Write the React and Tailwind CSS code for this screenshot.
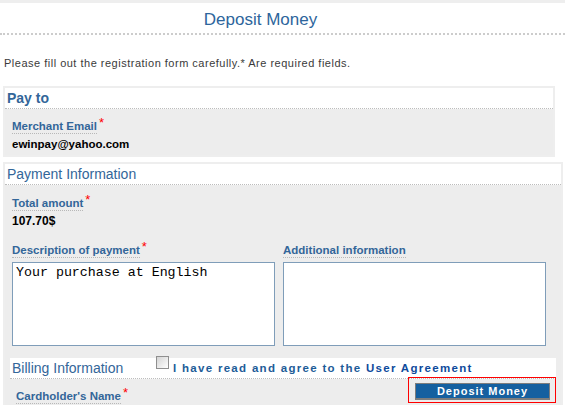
function SectionHeader({ children, bold }) {
  return (
    <div
      className={
        'h-[21px] border-b border-dotted border-[#bdbdbd] bg-white pl-[2px] text-[14px] leading-[20px] text-[#336699] ' +
        (bold ? 'font-bold' : '')
      }
    >
      {children}
    </div>
  )
}

function Label({ children, required }) {
  return (
    <div className="flex h-[15px] items-start whitespace-nowrap">
      <span className="border-b border-dotted border-[#b8b8b8] text-[11.5px] font-bold leading-[13px] text-[#336699]">
        {children}
      </span>
      {required && (
        <span className="-mt-[4px] ml-[2px] text-[13px] leading-[13px] text-[#ff0000]">*</span>
      )}
    </div>
  )
}

function Value({ children, size = 'text-[12px]' }) {
  return <div className={size + ' mt-[2px] font-bold leading-[14px] text-black'}>{children}</div>
}

function Box({ text }) {
  return (
    <textarea
      readOnly
      defaultValue={text}
      className="mt-[3px] block h-[84px] w-[263px] resize-none border border-[#7f9db9] bg-white px-[3px] py-[2px] font-['Liberation_Mono',monospace] text-[13.3px] leading-[15px] text-black outline-none"
    />
  )
}

export default function App() {
  return (
    <div className="h-[405px] w-[565px] overflow-hidden bg-white font-['Liberation_Sans',Arial,sans-serif]">
      <div className="h-[3px] bg-[#eeeeee]" />
      <div className="h-[30px] w-[521px] pt-[7px] text-center text-[17px] leading-[20px] text-[#2d659c]">
        Deposit Money
      </div>
      <div className="border-b-2 border-dotted border-[#cccccc]" />

      <p className="mt-[21px] pl-[4px] text-[11px] leading-[14px] tracking-[0.5px] text-[#3a3a3a]">
        Please fill out the registration form carefully.* Are required fields.
      </p>

      {/* Pay to */}
      <section className="ml-[3px] mt-[16px] w-[552px] border-2 border-[#eeeeee] bg-[#ededed]">
        <SectionHeader bold>Pay to</SectionHeader>
        <div className="h-[46px] pl-[7px] pt-[11px]">
          <Label required>Merchant Email</Label>
          <Value size="text-[11.5px]">ewinpay@yahoo.com</Value>
        </div>
      </section>

      {/* Payment Information */}
      <section className="ml-[3px] mt-[5px] w-[560px] border-2 border-[#eeeeee] bg-[#ededed]">
        <SectionHeader>Payment Information</SectionHeader>
        <div className="px-[5px] pb-[10px] pt-[12px]">
          <div className="pl-[2px]">
            <Label required>Total amount</Label>
            <Value>107.70$</Value>
          </div>

          <div className="mt-[16px] flex gap-[8px] pl-[2px]">
            <div>
              <Label required>Description of payment</Label>
              <Box text="Your purchase at English" />
            </div>
            <div>
              <Label>Additional information</Label>
              <Box text="" />
            </div>
          </div>

          <div className="mt-[12px] flex h-[21px] border-b border-dotted border-[#bdbdbd] bg-white pl-[2px]">
            <span className="w-[144px] text-[14px] leading-[20px] text-[#336699]">Billing Information</span>
            <span className="-mt-[2px] h-[13px] w-[13px] border border-[#8f8f8f] bg-gradient-to-br from-[#d4d4d4] to-white" />
            <span className="ml-[4px] whitespace-nowrap text-[11.5px] font-bold leading-[20px] tracking-[1.3px] text-[#1d5c98]">
              I have read and agree to the <span className="text-[#0e4a9c]">User Agreement</span>
            </span>
          </div>

          <div className="-mt-[2px] flex items-start justify-between">
            <div className="pl-[6px] pt-[13px]">
              <Label required>Cardholder's Name</Label>
            </div>
            <div className="h-[26px] w-[148px] border border-[#ff0000] pl-[6px] pt-[5px]">
              <button className="block h-[17px] w-[135px] border border-b-2 border-[#7d7d7d] bg-[#1560a0] text-[11px] font-bold leading-none tracking-[1px] text-white">
                Deposit Money
              </button>
            </div>
          </div>
        </div>
      </section>
    </div>
  )
}
